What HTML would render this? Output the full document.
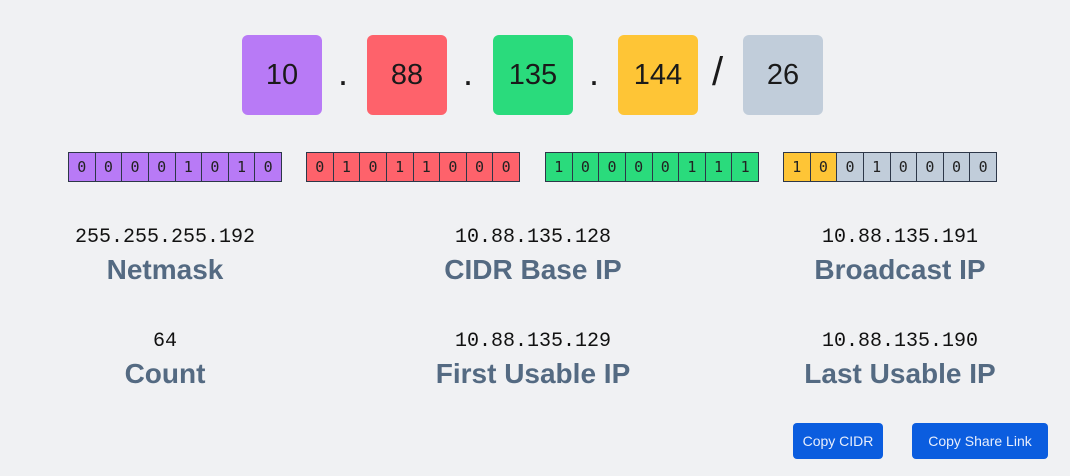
<!DOCTYPE html>
<html><head><style>
body{margin:0;width:1070px;height:476px;background:#f0f1f3;font-family:"Liberation Sans",sans-serif;position:relative;overflow:hidden}
.b{position:absolute;top:35px;width:80px;height:80px;border-radius:6px;display:flex;align-items:center;justify-content:center;font-size:29px;color:#1a1a1a}
.s{position:absolute;font-size:36px;color:#1a1a1a}
.bits{position:absolute;top:152px;width:212px;height:28px;display:flex;border:1px solid #2d3748}
.bits span{flex:1;box-sizing:border-box;height:28px;border-left:1px solid #2d3748;display:flex;align-items:center;justify-content:center;font-family:"DejaVu Sans Mono","Liberation Mono",monospace;font-size:15px;color:#222}
.bits span:first-child{border-left:none}
.c{position:absolute;width:300px;text-align:center}
.v{font-family:"Liberation Mono",monospace;font-size:20px;color:#111;height:24px}
.l{font-weight:bold;font-size:28px;color:#546a82;margin-top:4px}
.btn{position:absolute;top:423px;height:36px;background:#0b5ddf;color:#e8eefc;border-radius:4px;font-size:14px;display:flex;align-items:center;justify-content:center}
</style></head><body>
<div class="b" style="left:242px;background:#b87af6">10</div>
<div class="s" style="left:338px;top:52px">.</div>
<div class="b" style="left:367px;background:#fe626b">88</div>
<div class="s" style="left:463px;top:52px">.</div>
<div class="b" style="left:493px;background:#2adb7c">135</div>
<div class="s" style="left:589px;top:52px">.</div>
<div class="b" style="left:618px;background:#fec536">144</div>
<div class="s" style="left:712px;top:50px;font-size:40px">/</div>
<div class="b" style="left:743px;background:#c1cdda">26</div>

<div class="bits" style="left:68px;background:#b87af6"><span>0</span><span>0</span><span>0</span><span>0</span><span>1</span><span>0</span><span>1</span><span>0</span></div>
<div class="bits" style="left:306px;background:#fe626b"><span>0</span><span>1</span><span>0</span><span>1</span><span>1</span><span>0</span><span>0</span><span>0</span></div>
<div class="bits" style="left:545px;background:#2adb7c"><span>1</span><span>0</span><span>0</span><span>0</span><span>0</span><span>1</span><span>1</span><span>1</span></div>
<div class="bits" style="left:783px;background:#c1cdda"><span style="background:#fec536">1</span><span style="background:#fec536">0</span><span>0</span><span>1</span><span>0</span><span>0</span><span>0</span><span>0</span></div>

<div class="c" style="left:15px;top:226px"><div class="v">255.255.255.192</div><div class="l">Netmask</div></div>
<div class="c" style="left:383px;top:226px"><div class="v">10.88.135.128</div><div class="l">CIDR Base IP</div></div>
<div class="c" style="left:750px;top:226px"><div class="v">10.88.135.191</div><div class="l">Broadcast IP</div></div>
<div class="c" style="left:15px;top:330px"><div class="v">64</div><div class="l">Count</div></div>
<div class="c" style="left:383px;top:330px"><div class="v">10.88.135.129</div><div class="l">First Usable IP</div></div>
<div class="c" style="left:750px;top:330px"><div class="v">10.88.135.190</div><div class="l">Last Usable IP</div></div>

<div class="btn" style="left:793px;width:90px">Copy CIDR</div>
<div class="btn" style="left:912px;width:136px">Copy Share Link</div>
</body></html>
